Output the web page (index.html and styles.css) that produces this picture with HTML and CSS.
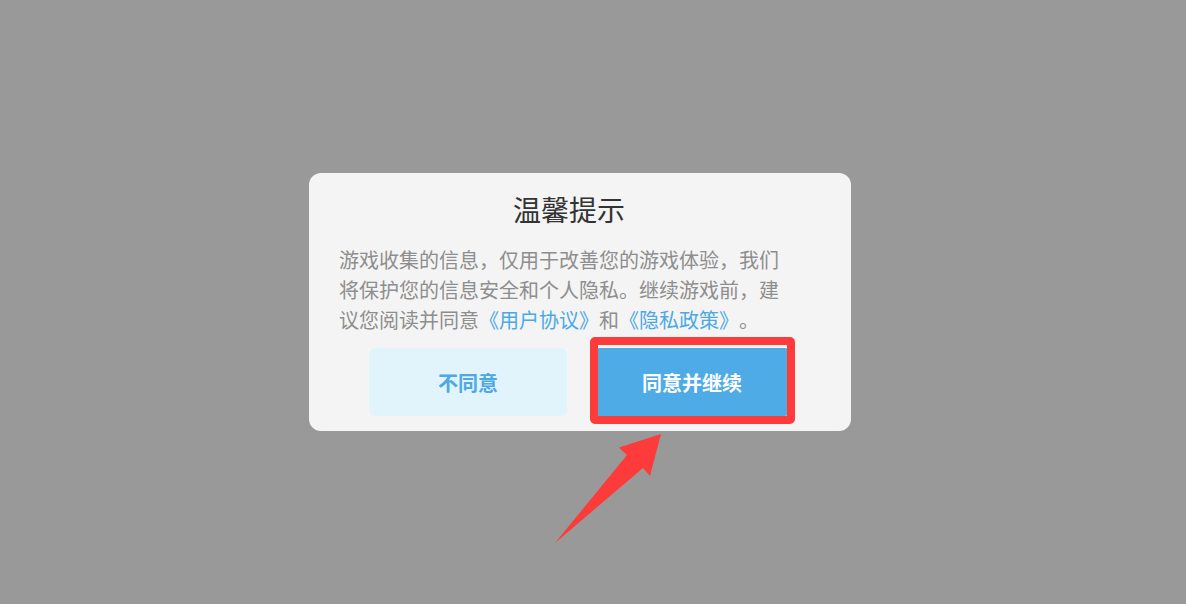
FILE: index.html
```html
<!DOCTYPE html>
<html lang="zh-CN">
<head>
<meta charset="utf-8">
<title>温馨提示</title>
<link rel="stylesheet" href="styles.css">
</head>
<body>
<div class="stage">
  <div class="dialog">
    <h1 class="title">温馨提示</h1>
    <p class="message">游戏收集的信息，仅用于改善您的游戏体验，我们将保护您的信息安全和个人隐私。继续游戏前，建议您阅读并同意<a class="link">《用户协议》</a>和<a class="link">《隐私政策》</a>。</p>
    <div class="actions">
      <button class="btn btn-decline">不同意</button>
      <button class="btn btn-accept">同意并继续</button>
    </div>
  </div>
  <div class="highlight"></div>
  <svg class="arrow" width="1186" height="604" viewBox="0 0 1186 604" aria-hidden="true">
    <polygon points="555,543 627,455 619,447.5 661,434 650,476 643,468" fill="#fd3b3b"/>
  </svg>
</div>
</body>
</html>
```
FILE: styles.css
```css
html, body {
  margin: 0;
  padding: 0;
}
body {
  background: #999999;
  font-family: "Noto Sans CJK SC", "Noto Sans", sans-serif;
}
.stage {
  position: relative;
  width: 1186px;
  height: 604px;
  display: flex;
  justify-content: flex-start;
  align-items: flex-start;
  padding: 173px 0 0 309px;
  box-sizing: border-box;
}
.dialog {
  width: 542px;
  height: 258px;
  box-sizing: border-box;
  background: #f4f4f4;
  border-radius: 12px;
  padding: 16px 0 15px;
  display: flex;
  flex-direction: column;
}
.title {
  margin: 0;
  padding-right: 22px;
  font-size: 28px;
  line-height: 40px;
  font-weight: 400;
  color: #333333;
  text-align: center;
}
.message {
  margin: 16px 0 0 30px;
  width: 446px;
  font-size: 20px;
  line-height: 30px;
  color: #8e8e8e;
  text-spacing-trim: space-all;
  font-feature-settings: "halt" 0, "chws" 0;
}
.link {
  color: #4ba9e4;
}
.actions {
  margin-top: 13px;
  padding: 0 60px;
  display: flex;
  gap: 26px;
}
.btn {
  flex: 1;
  height: 68px;
  border: none;
  border-radius: 6px;
  font-family: "Noto Sans CJK SC", "Noto Sans", sans-serif;
  font-size: 20px;
  font-weight: 700;
  padding: 0;
}
.btn-decline {
  background: #e1f4fc;
  color: #4ea8e2;
}
.btn-accept {
  background: #4eabe6;
  color: #ffffff;
}
.highlight {
  position: absolute;
  left: 590px;
  top: 337px;
  width: 205px;
  height: 87px;
  box-sizing: border-box;
  border: 8px solid #fd3b3b;
  border-radius: 5px;
}
.arrow {
  position: absolute;
  left: 0;
  top: 0;
}
```
